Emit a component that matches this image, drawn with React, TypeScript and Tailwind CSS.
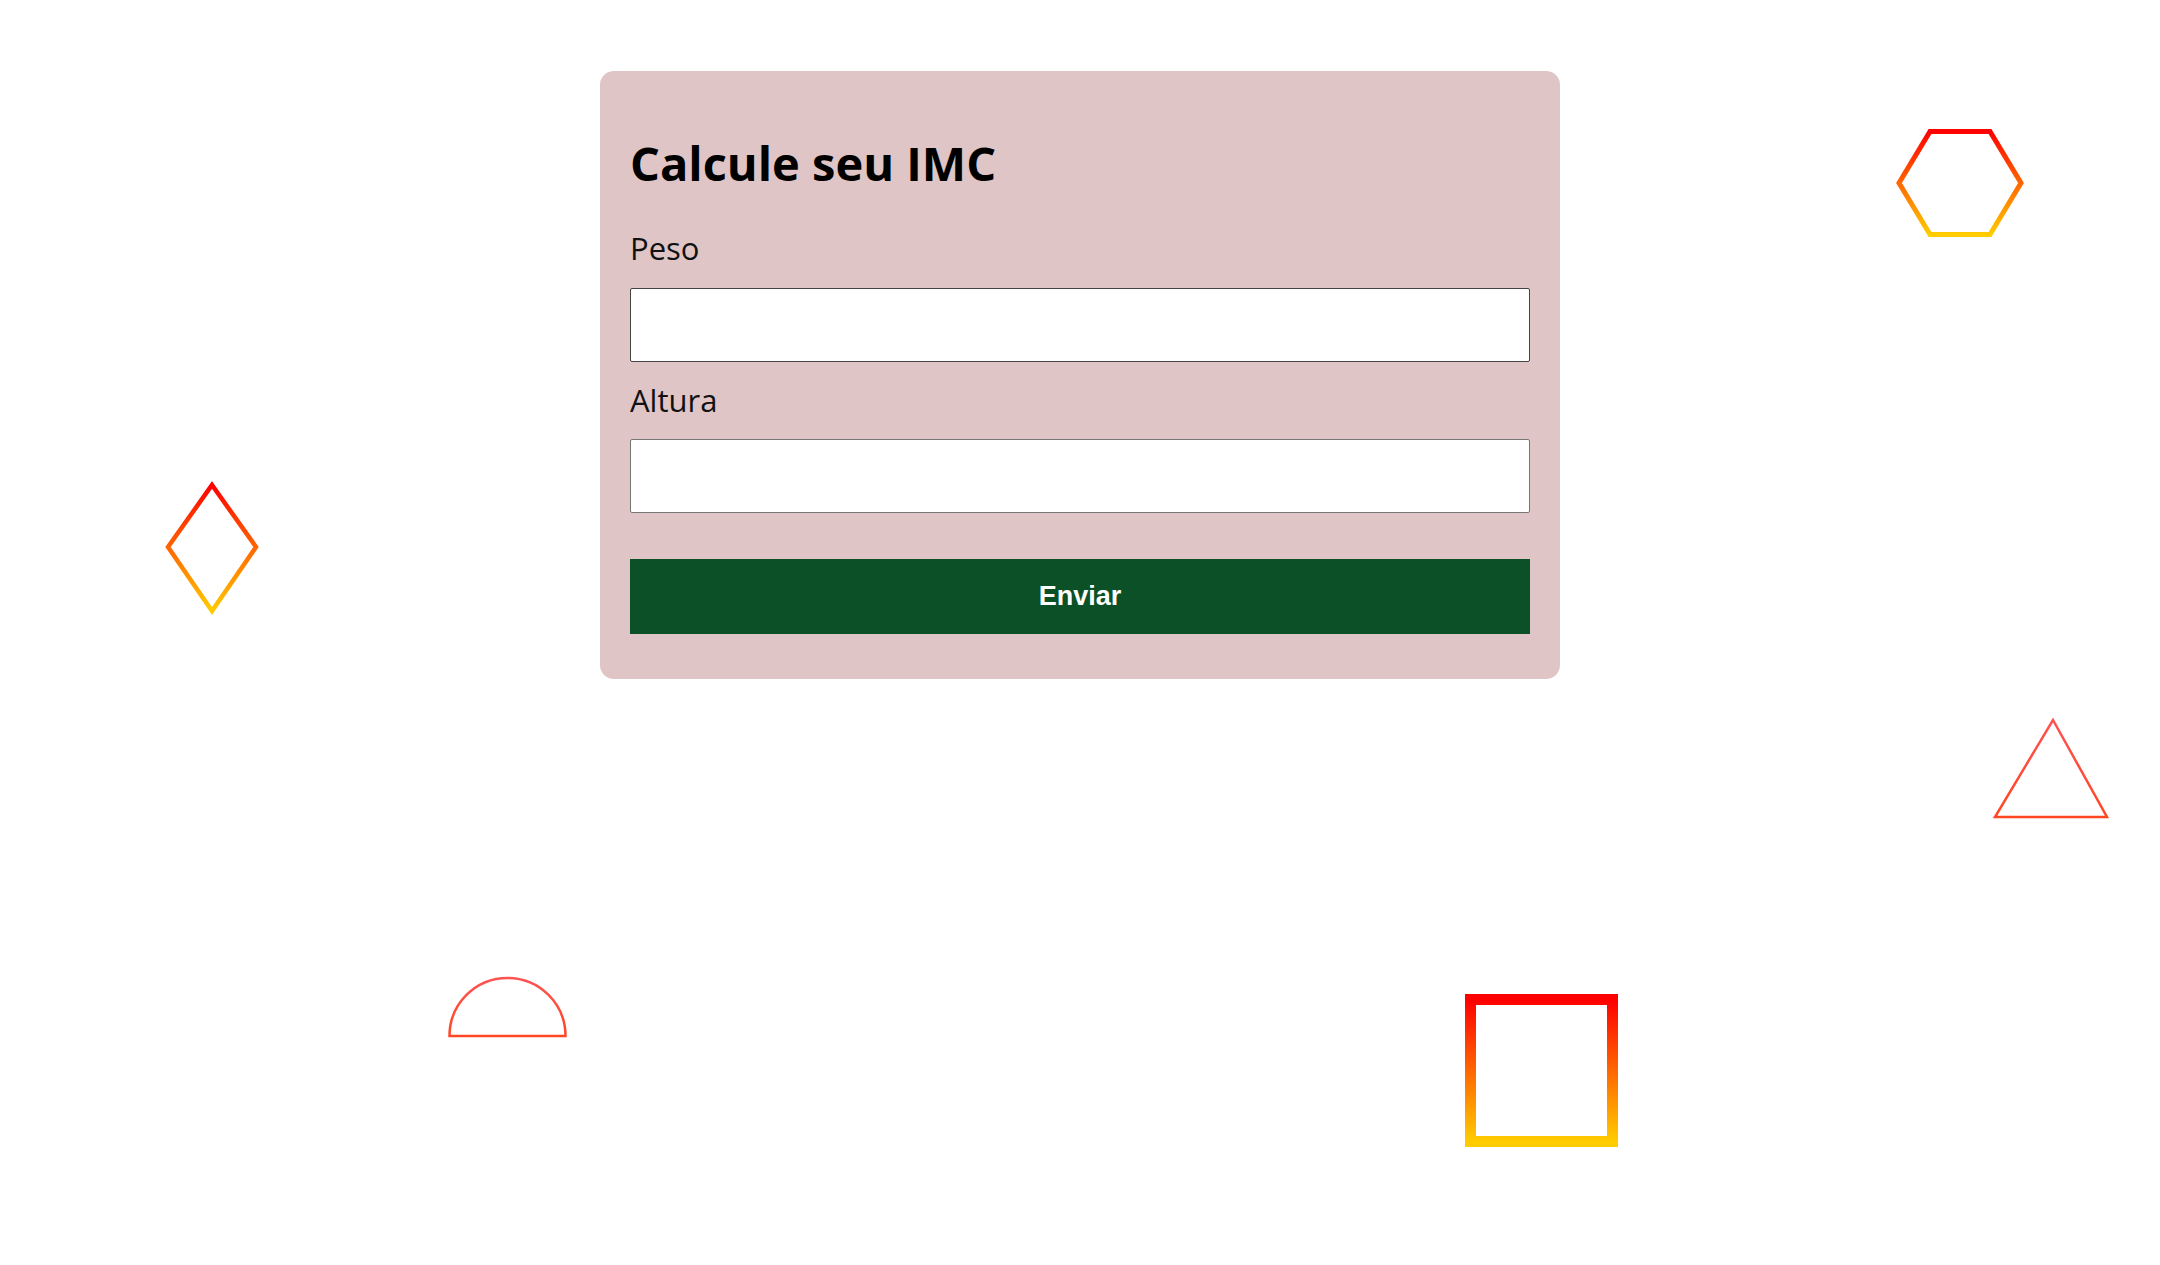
import React from "react";

function Shapes() {
  return (
    <svg
      className="absolute left-0 top-0 pointer-events-none"
      width={2160}
      height={1265}
      viewBox="0 0 2160 1265"
    >
      <defs>
        <linearGradient id="ry" x1="0" y1="0" x2="0" y2="1">
          <stop offset="0" stopColor="#ff0000" />
          <stop offset="1" stopColor="#ffcc00" />
        </linearGradient>
        <linearGradient id="ro" x1="0" y1="0" x2="0" y2="1">
          <stop offset="0" stopColor="#ff5252" />
          <stop offset="1" stopColor="#ff4724" />
        </linearGradient>
      </defs>
      {/* hexagon */}
      <polygon
        points="1930,131.5 1990,131.5 2021,183 1990,234.5 1930,234.5 1899,183"
        fill="none"
        stroke="url(#ry)"
        strokeWidth={5}
        strokeLinejoin="miter"
      />
      {/* diamond */}
      <polygon
        points="212,485 256,547 212,611 168,547"
        fill="none"
        stroke="url(#ry)"
        strokeWidth={4.5}
      />
      {/* triangle */}
      <polygon
        points="2053,720 2107,817 1995,817"
        fill="none"
        stroke="url(#ro)"
        strokeWidth={2.5}
      />
      {/* half circle */}
      <path
        d="M449.5,1036 A58,58 0 0 1 565.5,1036 Z"
        fill="none"
        stroke="url(#ro)"
        strokeWidth={2.5}
      />
      {/* square */}
      <rect
        x={1470.5}
        y={999.5}
        width={142}
        height={142}
        fill="none"
        stroke="url(#ry)"
        strokeWidth={11}
      />
    </svg>
  );
}

export default function App() {
  return (
    <div className="relative w-full h-[1265px] bg-white overflow-hidden">
      <Shapes />
      <div className="relative flex justify-center pt-[71px]">
        <div
          className="w-[960px] bg-[#dfc5c6] rounded-[14px] px-[30px] pt-[60px] pb-[45px] flex flex-col"
          style={{ fontFamily: '"Open Sans", "Noto Sans", sans-serif' }}
        >
          <h1 className="text-[47px] leading-[65px] font-bold text-black">
            Calcule seu IMC
          </h1>
          <label className="mt-[30px] text-[31px] leading-[44px] text-[#111]">
            Peso
          </label>
          <input
            type="text"
            className="mt-[18px] h-[74px] w-full bg-white border border-[#444444] rounded-[2px] outline-none"
          />
          <label className="mt-[16px] text-[31px] leading-[44px] text-[#111]">
            Altura
          </label>
          <input
            type="text"
            className="mt-[17px] h-[74px] w-full bg-white border border-[#767676] rounded-[2px] outline-none"
          />
          <button
            className="mt-[46px] h-[75px] w-full bg-[#0b5026] text-white text-[27px] font-bold"
            style={{ fontFamily: '"Liberation Sans", Arial, sans-serif' }}
          >
            Enviar
          </button>
        </div>
      </div>
    </div>
  );
}
